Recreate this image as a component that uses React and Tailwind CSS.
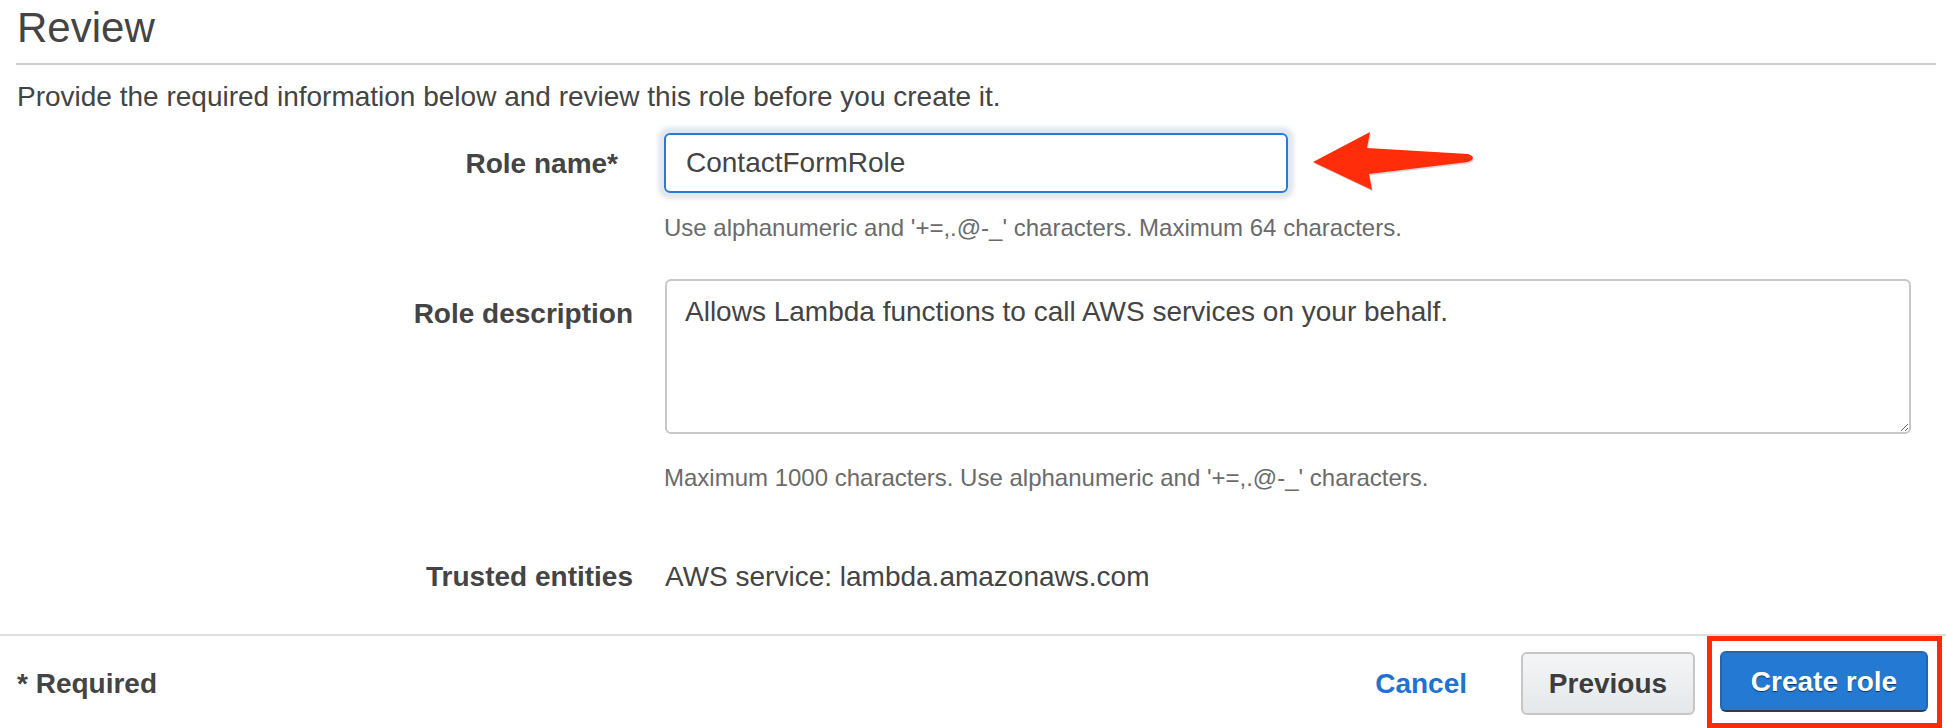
import React from 'react'

function Arrow() {
  return (
    <svg width="166" height="64" viewBox="0 0 166 64" className="ml-[22px] mt-[-4px] shrink-0">
      <path
        d="M3 33 L60 3 L57 19 L158 25 Q165 27 162 31 L158 33 L59 45 L62 61 Z"
        fill="#8a8a8a"
        opacity="0.35"
        transform="translate(1 1.5)"
      />
      <path d="M3 33 L60 3 L57 19 L158 25 Q165 27 162 31 L158 33 L59 45 L62 61 Z" fill="#ff2d0a" />
    </svg>
  )
}

export default function App() {
  return (
    <div className="h-[728px] w-full overflow-hidden bg-white text-[#444444] font-['Liberation_Sans',Arial,Helvetica,sans-serif] flex flex-col">
      <div className="ml-[16px] mr-[10px]">
        <h2 className="mt-[3px] pl-[1px] pb-[10px] text-[42px] leading-[50px] font-normal border-b-2 border-[#cccccc]">
          Review
        </h2>
        <p className="mt-[16px] pl-[1px] text-[28px] leading-[32px]">
          Provide the required information below and review this role before you create it.
        </p>

        {/* role name */}
        <div className="mt-[20px] flex items-start">
          <div className="w-[617px] h-[60px] pr-[15px] pt-[2px] flex items-center justify-end text-[28px] font-bold shrink-0">
            Role name*
          </div>
          <div className="ml-[31px] flex flex-col">
            <div className="flex items-start">
              <input
                readOnly
                value="ContactFormRole"
                className="w-[624px] h-[60px] px-[20px] border-2 border-[#2a7ad0] rounded-[6px] text-[28px] text-[#444444] outline-none shadow-[0_0_4px_6px_rgba(180,196,218,0.4)]"
              />
              <Arrow />
            </div>
          </div>
        </div>
        <div className="ml-[648px] mt-[21px] text-[24px] leading-[28px] text-[#6b6b6b]">
          Use alphanumeric and '+=,.@-_' characters. Maximum 64 characters.
        </div>

        {/* role description */}
        <div className="mt-[37px] flex items-start">
          <div className="w-[617px] pt-[19px] text-right text-[28px] leading-[32px] font-bold shrink-0">
            Role description
          </div>
          <textarea
            readOnly
            defaultValue="Allows Lambda functions to call AWS services on your behalf."
            className="ml-[32px] w-[1246px] h-[155px] pt-[15px] px-[18px] border-2 border-[#c8c8c8] rounded-[6px] text-[28px] leading-[32px] text-[#444444] outline-none"
          />
        </div>
        <div className="ml-[648px] mt-[30px] text-[24px] leading-[28px] text-[#6b6b6b]">
          Maximum 1000 characters. Use alphanumeric and '+=,.@-_' characters.
        </div>

        {/* trusted entities */}
        <div className="mt-[69px] flex items-start text-[28px] leading-[32px]">
          <div className="w-[617px] text-right font-bold shrink-0">Trusted entities</div>
          <div className="ml-[32px]">AWS service: lambda.amazonaws.com</div>
        </div>
      </div>

      <div className="mt-[41px] border-t-2 border-[#dddddd]" />

      <div className="flex items-start pl-[17px] mr-[4px]">
        <div className="mt-[32px] text-[28px] leading-[32px] font-bold">* Required</div>
        <div className="ml-auto mt-[32px] text-[28px] leading-[32px] font-bold text-[#1f73cf]">Cancel</div>
        <button className="ml-[54px] mt-[16px] w-[174px] h-[63px] rounded-[6px] border-2 border-[#c6c6c6] bg-gradient-to-b from-[#f4f5f6] to-[#e5e8ea] text-[28px] font-bold text-[#3d3d3d]">
          Previous
        </button>
        <div className="ml-[12px] border-[5px] border-[#ff2a0a] pl-[8px] pr-[9px] pt-[10px] pb-[11px]">
          <button className="w-[208px] h-[61px] rounded-[6px] border-2 border-[#2466ad] border-b-[#2f3d52] bg-[#2479d3] text-[28px] font-bold text-white [text-shadow:0_1px_1px_rgba(0,0,0,0.55)]">
            Create role
          </button>
        </div>
      </div>
    </div>
  )
}
